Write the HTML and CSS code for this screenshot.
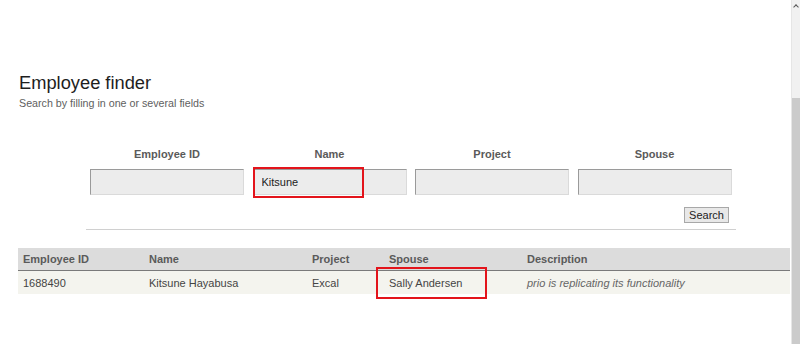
FILE: index.html
```html
<!DOCTYPE html>
<html>
<head>
<meta charset="utf-8">
<title>Employee finder</title>
<link rel="stylesheet" href="styles.css">
</head>
<body>
<div class="window">
  <main class="page">
    <header class="intro">
      <h1 class="title">Employee finder</h1>
      <p class="subtitle">Search by filling in one or several fields</p>
    </header>
    <form class="finder">
      <div class="fields">
        <div class="field">
          <label class="field-label">Employee ID</label>
          <div class="input-wrap"><input class="field-input" type="text"></div>
        </div>
        <div class="field">
          <label class="field-label">Name</label>
          <div class="input-wrap"><input class="field-input" type="text" value="Kitsune"><span class="mark mark-input"></span></div>
        </div>
        <div class="field">
          <label class="field-label">Project</label>
          <div class="input-wrap"><input class="field-input" type="text"></div>
        </div>
        <div class="field">
          <label class="field-label">Spouse</label>
          <div class="input-wrap"><input class="field-input" type="text"></div>
        </div>
      </div>
      <div class="actions"><button class="search-btn" type="button">Search</button></div>
    </form>
    <table class="results">
      <thead>
        <tr>
          <th class="c-id">Employee ID</th>
          <th class="c-name">Name</th>
          <th class="c-project">Project</th>
          <th class="c-spouse">Spouse</th>
          <th class="c-desc">Description</th>
        </tr>
      </thead>
      <tbody>
        <tr>
          <td>1688490</td>
          <td>Kitsune Hayabusa</td>
          <td>Excal</td>
          <td class="marked">Sally Andersen<span class="mark mark-cell"></span></td>
          <td class="desc">prio is replicating its functionality</td>
        </tr>
      </tbody>
    </table>
  </main>
  <div class="scrollbar">
    <div class="scroll-track"><span class="scroll-arrow"></span></div>
    <div class="scroll-thumb"></div>
  </div>
</div>
</body>
</html>
```
FILE: styles.css
```css
html, body {
  margin: 0;
  padding: 0;
  background: #fff;
}
body {
  font-family: "Liberation Sans", Arial, sans-serif;
  color: #333;
}
.window {
  display: flex;
  width: 800px;
  height: 344px;
  overflow: hidden;
}
.page {
  flex: 1;
  padding: 72px 2px 0 18px;
  min-width: 0;
}
.title {
  margin: 0;
  font-size: 18.3px;
  line-height: 22px;
  font-weight: normal;
  color: #1e1e1e;
  padding-left: 1px;
}
.subtitle {
  margin: 2px 0 0;
  font-size: 10.7px;
  line-height: 14px;
  color: #606060;
  padding-left: 1px;
}
.finder {
  margin: 37px 0 0 68px;
  width: 650px;
  border-bottom: 1px solid #d0d0d0;
  padding-bottom: 6px;
}
.fields {
  display: grid;
  grid-template-columns: repeat(4, 154px);
  column-gap: 8.5px;
  padding: 0 4px;
}
.field {
  display: flex;
  flex-direction: column;
  align-items: center;
}
.field-label {
  font-size: 11px;
  line-height: 14px;
  font-weight: bold;
  color: #5a5a5a;
}
.input-wrap {
  position: relative;
  margin-top: 8px;
  width: 154px;
  height: 26px;
}
.field-input {
  box-sizing: border-box;
  width: 154px;
  height: 26px;
  margin: 0;
  padding: 0 8px;
  background: #ececec;
  border: 1px solid #dadada;
  border-top-color: #9a9a9a;
  border-left-color: #9a9a9a;
  font-family: "Liberation Sans", Arial, sans-serif;
  font-size: 11px;
  color: #222;
  outline: none;
}
.mark {
  position: absolute;
  box-sizing: border-box;
  border: 2px solid #e3141b;
  pointer-events: none;
}
.mark-input {
  left: 0;
  top: -2px;
  width: 111px;
  height: 31px;
}
.actions {
  display: flex;
  justify-content: flex-end;
  margin-top: 12px;
  padding-right: 7px;
}
.search-btn {
  box-sizing: border-box;
  height: 16px;
  width: 45px;
  padding: 0;
  margin: 0;
  font-family: "Liberation Sans", Arial, sans-serif;
  font-size: 11px;
  line-height: 14px;
  color: #222;
  background: #e8e8e8;
  border: 1px solid #a8a8a8;
  border-radius: 0;
}
.results {
  margin-top: 18px;
  width: 772px;
  border-collapse: collapse;
  table-layout: fixed;
  font-size: 11px;
}
.results th,
.results td {
  text-align: left;
  padding: 0 5px;
  white-space: nowrap;
}
.results th {
  height: 22px;
  background: #dcdcdc;
  color: #5a5a5a;
  font-weight: bold;
  border-bottom: 1px solid #7a7a7a;
}
.results td {
  height: 23px;
  background: #f4f4ee;
  color: #444;
}
.c-id { width: 116px; }
.c-name { width: 153px; }
.c-project { width: 67px; }
.c-spouse { width: 128px; }
.results td.desc {
  font-style: italic;
  color: #666;
}
.marked {
  position: relative;
}
.mark-cell {
  left: -8px;
  top: -4px;
  width: 111px;
  height: 32px;
}
.scrollbar {
  width: 8px;
  display: flex;
  flex-direction: column;
  border-left: 1px solid #e6e6e6;
}
.scroll-track {
  height: 98px;
  background: #f1f1f1;
  position: relative;
}
.scroll-arrow {
  position: absolute;
  left: 2px;
  top: 5px;
  width: 3px;
  height: 3px;
  border-left: 1px solid #555;
  border-top: 1px solid #555;
  transform: rotate(45deg);
}
.scroll-thumb {
  flex: 1;
  background: #cbcbcb;
}
```
